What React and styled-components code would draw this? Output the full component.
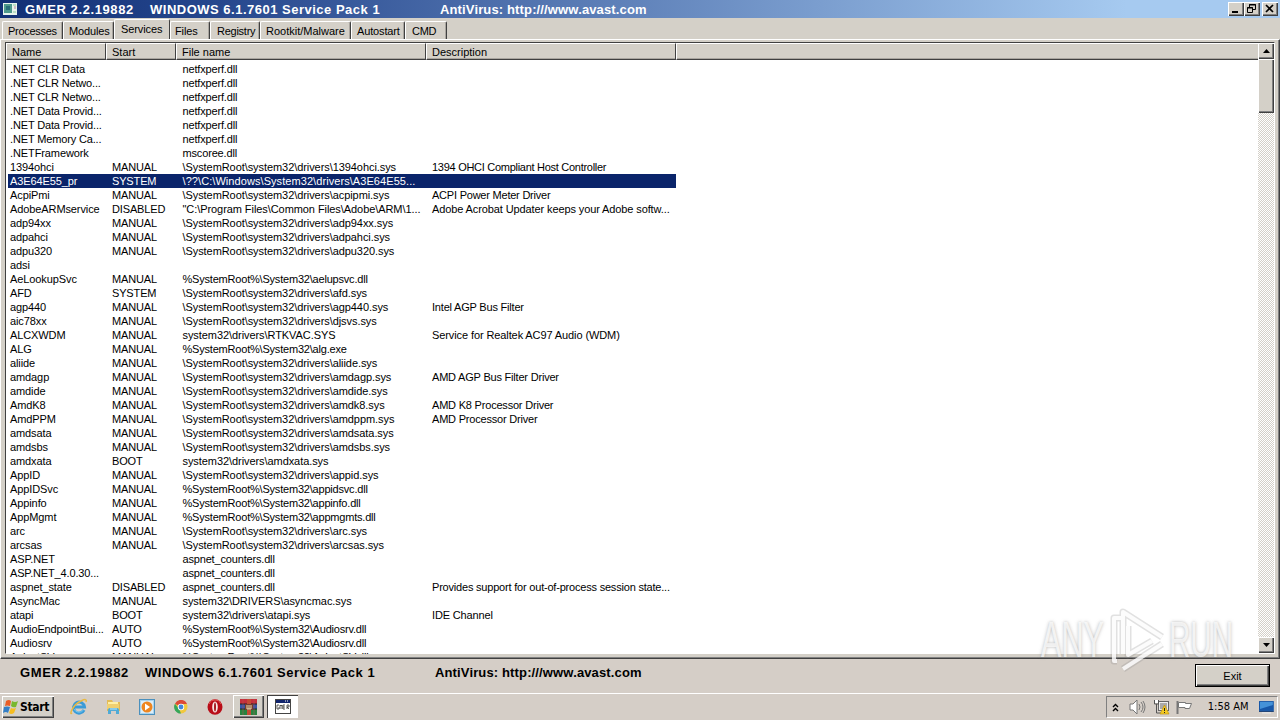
import React from "react";
import styled, { createGlobalStyle, css } from "styled-components";

const face = "#d4d0c8";
const shade = "#808080";
const dark = "#404040";

const Global = createGlobalStyle`
  *, *::before, *::after { box-sizing: border-box; }
  html, body { margin: 0; padding: 0; overflow: hidden; }
  body { background: ${face}; font: 11px/14px "Liberation Sans", Arial, sans-serif; color: #000; }
  svg { display: block; }
`;

const raised = css`
  background: ${face};
  box-shadow: inset 1px 1px #fff, inset -1px -1px ${dark}, inset -2px -2px ${shade};
`;

const Screen = styled.div`
  position: relative;
  width: 1280px;
  height: 720px;
  display: flex;
  flex-direction: column;
  overflow: hidden;
  background: #d5cec7;
`;

const TitleBar = styled.header`
  height: 18px;
  flex: none;
  display: flex;
  align-items: center;
  padding: 0 2px 0 3px;
  color: #fff;
  background: linear-gradient(90deg, #123075 0%, #24458c 16%, #a6caf0 88%, #a6caf0 100%);
`;

const AppIcon = styled.svg`
  width: 14px;
  height: 12px;
  margin-right: 8px;
`;

const Caption = styled.div`
  display: flex;
  white-space: pre;
  font: bold 13px/16px "Liberation Sans", Arial, sans-serif;
`;

const CaptionTitle = styled(Caption)`
  padding-top: 1px;
`;

const Phrase = styled.span`
  width: ${(p) => p.$w}px;
  letter-spacing: ${(p) => p.$ls || 0}px;
`;

const WindowButtons = styled.div`
  display: flex;
  margin-left: auto;
`;

const WindowButton = styled.div`
  ${raised}
  width: 16px;
  height: 14px;
  margin-left: ${(p) => (p.$gap ? 2 : 0)}px;
`;

const TabStrip = styled.nav`
  height: 21px;
  flex: none;
  display: flex;
  align-items: flex-end;
  padding-left: 2px;
  background: ${face};
`;

const Tab = styled.div`
  width: ${(p) => p.$w}px;
  height: ${(p) => (p.$active ? 20 : 18)}px;
  padding: ${(p) => (p.$active ? 2 : 2)}px 0 0 ${(p) => p.$pad}px;
  letter-spacing: ${(p) => p.$ls || 0}px;
  white-space: nowrap;
  border-top: 1px solid #fff;
  border-left: 1px solid #fff;
  border-right: 1px solid ${dark};
  border-radius: 2px 2px 0 0;
  box-shadow: ${(p) => (p.$active ? "none" : `inset -1px 0 #a9a59f`)};
`;

const Page = styled.main`
  height: 620px;
  flex: none;
  display: flex;
  padding: 2px 4px 4px 4px;
  border-top: 1px solid #fff;
  border-left: 1px solid #fff;
  border-right: 1px solid ${dark};
  border-bottom: 1px solid ${dark};
  box-shadow: inset -1px -1px ${shade};
  background: ${face};
`;

const ListView = styled.section`
  flex: 1;
  display: flex;
  border: 1px solid ${dark};
  border-right-color: #fff;
  border-bottom-color: #fff;
  background: #fff;
`;

const ListMain = styled.div`
  flex: 1;
  height: 611px;
  overflow: hidden;
`;

const columns = [
  ["Name", 100],
  ["Start", 70],
  ["File name", 250],
  ["Description", 250],
];

const HeaderRow = styled.div`
  display: flex;
  height: 17px;
  background: ${face};
  margin-bottom: 2px;
`;

const HeaderCell = styled.div`
  width: ${(p) => (p.$w ? `${p.$w}px` : "auto")};
  flex: ${(p) => (p.$w ? "none" : 1)};
  padding: 1px 0 0 5px;
  border-top: 1px solid #fff;
  border-left: 1px solid #fff;
  border-bottom: 1px solid ${dark};
  border-right: ${(p) => (p.$w ? `1px solid ${dark}` : "none")};
  box-shadow: inset 0 -1px #a9a59f;
`;

const Row = styled.div`
  display: grid;
  grid-template-columns: 98px 70px 250px 250px;
  width: 668px;
  height: 14px;
  margin-left: 2px;
  white-space: pre;
  background: ${(p) => (p.$selected ? "#0a246a" : "transparent")};
  color: ${(p) => (p.$selected ? "#fff" : "#000")};
`;

const Cell = styled.span`
  padding-left: ${(p) => p.$pad}px;
  letter-spacing: ${(p) => p.$ls}px;
`;

const ScrollBar = styled.div`
  width: 16px;
  display: flex;
  flex-direction: column;
  background: repeating-conic-gradient(#fff 0 25%, ${face} 0 50%) 0 0 / 2px 2px;
`;

const ScrollButton = styled.div`
  ${raised}
  height: 16px;
  flex: none;
  display: flex;
  align-items: center;
  justify-content: center;
`;

const ScrollThumb = styled.div`
  ${raised}
  height: 54px;
  margin-bottom: auto;
`;

const Footer = styled.footer`
  height: 34px;
  flex: none;
  display: flex;
  align-items: flex-start;
  padding: 5px 10px 0 20px;
`;

const FooterCaption = styled(Caption)`
  padding-top: 1px;
`;

const ExitButton = styled.div`
  width: 75px;
  height: 23px;
  margin-left: auto;
  padding-top: 4px;
  text-align: center;
  border: 1px solid #000;
  background: ${face};
  box-shadow: inset 1px 1px #fff, inset -1px -1px ${dark}, inset -2px -2px ${shade};
`;

const TaskBar = styled.div`
  height: 27px;
  flex: none;
  display: flex;
  align-items: flex-start;
  padding: 1px 2px 0 2px;
  border-top: 1px solid #fff;
`;

const StartButton = styled.div`
  ${raised}
  width: 52px;
  height: 22px;
  margin-right: 8px;
  margin-top: 1px;
  padding-left: 1px;
  display: flex;
  align-items: center;
  font: bold 12px/16px "DejaVu Sans Condensed", "Liberation Sans", sans-serif;
  letter-spacing: -0.35px;
`;

const TaskSlot = styled.div`
  width: ${(p) => (p.$kind ? 31 : 34)}px;
  height: 23px;
  margin-left: ${(p) => (p.$kind ? 3 : 0)}px;
  display: flex;
  align-items: center;
  justify-content: center;
  ${(p) => p.$kind === "open" && raised}
  ${(p) =>
    p.$kind === "open" &&
    css`
      margin-left: 1px;
    `}
  ${(p) =>
    p.$kind === "active" &&
    css`
      background: #fff;
      box-shadow: inset 1px 1px ${dark}, inset -1px -1px #fff;
    `}
`;

const Tray = styled.div`
  width: 172px;
  height: 22px;
  margin: 1px 0 0 auto;
  padding: 0 2px 0 5px;
  display: flex;
  align-items: center;
  border: 1px solid ${shade};
  border-right-color: #fff;
  border-bottom-color: #fff;
`;

const TraySlot = styled.div`
  width: ${(p) => p.$w}px;
`;

const Clock = styled.span`
  font: 11px/14px "DejaVu Sans Condensed", sans-serif;
  width: 51px;
  white-space: nowrap;
`;

const Watermark = styled.div`
  position: absolute;
  left: 1041px;
  top: 606px;
  width: 196px;
  height: 68px;
  display: flex;
  align-items: center;
  opacity: 0.9;
`;

const MarkWord = styled.span`
  width: ${(p) => p.$w}px;
  font: 36px/68px "Liberation Sans", Arial, sans-serif;
  color: rgba(255, 255, 255, 0.75);
  text-shadow: 0 0 3px rgba(120, 120, 120, 0.6);
  transform: scale(${(p) => p.$sx}, 1.4);
  transform-origin: 0 50%;
  white-space: nowrap;
`;

const R = "\\SystemRoot\\system32\\drivers\\";
const S = "%SystemRoot%\\System32\\";
const services = [
  [".NET CLR Data", "", "netfxperf.dll"],
  [".NET CLR Netwo...", "", "netfxperf.dll"],
  [".NET CLR Netwo...", "", "netfxperf.dll"],
  [".NET Data Provid...", "", "netfxperf.dll"],
  [".NET Data Provid...", "", "netfxperf.dll"],
  [".NET Memory Ca...", "", "netfxperf.dll"],
  [".NETFramework", "", "mscoree.dll"],
  ["1394ohci", "MANUAL", R + "1394ohci.sys", "1394 OHCI Compliant Host Controller", -0.28],
  ["A3E64E55_pr", "SYSTEM", "\\??\\C:\\Windows\\System32\\drivers\\A3E64E55..."],
  ["AcpiPmi", "MANUAL", R + "acpipmi.sys", "ACPI Power Meter Driver", -0.22],
  ["AdobeARMservice", "DISABLED", "\"C:\\Program Files\\Common Files\\Adobe\\ARM\\1...", "Adobe Acrobat Updater keeps your Adobe softw...", -0.11],
  ["adp94xx", "MANUAL", R + "adp94xx.sys"],
  ["adpahci", "MANUAL", R + "adpahci.sys"],
  ["adpu320", "MANUAL", R + "adpu320.sys"],
  ["adsi", "", ""],
  ["AeLookupSvc", "MANUAL", S + "aelupsvc.dll"],
  ["AFD", "SYSTEM", R + "afd.sys"],
  ["agp440", "MANUAL", R + "agp440.sys", "Intel AGP Bus Filter", -0.2],
  ["aic78xx", "MANUAL", R + "djsvs.sys"],
  ["ALCXWDM", "MANUAL", "system32\\drivers\\RTKVAC.SYS", "Service for Realtek AC97 Audio (WDM)", -0.1],
  ["ALG", "MANUAL", S + "alg.exe"],
  ["aliide", "MANUAL", R + "aliide.sys"],
  ["amdagp", "MANUAL", R + "amdagp.sys", "AMD AGP Bus Filter Driver", -0.2],
  ["amdide", "MANUAL", R + "amdide.sys"],
  ["AmdK8", "MANUAL", R + "amdk8.sys", "AMD K8 Processor Driver", -0.2],
  ["AmdPPM", "MANUAL", R + "amdppm.sys", "AMD Processor Driver", -0.2],
  ["amdsata", "MANUAL", R + "amdsata.sys"],
  ["amdsbs", "MANUAL", R + "amdsbs.sys"],
  ["amdxata", "BOOT", "system32\\drivers\\amdxata.sys"],
  ["AppID", "MANUAL", R + "appid.sys"],
  ["AppIDSvc", "MANUAL", S + "appidsvc.dll"],
  ["Appinfo", "MANUAL", S + "appinfo.dll"],
  ["AppMgmt", "MANUAL", S + "appmgmts.dll"],
  ["arc", "MANUAL", R + "arc.sys"],
  ["arcsas", "MANUAL", R + "arcsas.sys"],
  ["ASP.NET", "", "aspnet_counters.dll"],
  ["ASP.NET_4.0.30...", "", "aspnet_counters.dll"],
  ["aspnet_state", "DISABLED", "aspnet_counters.dll", "Provides support for out-of-process session state...", -0.2],
  ["AsyncMac", "MANUAL", "system32\\DRIVERS\\asyncmac.sys"],
  ["atapi", "BOOT", "system32\\drivers\\atapi.sys", "IDE Channel", -0.15],
  ["AudioEndpointBui...", "AUTO", S + "Audiosrv.dll"],
  ["Audiosrv", "AUTO", S + "Audiosrv.dll"],
  ["AxInstSV", "MANUAL", S + "AxInstSV.dll"],
];

// Tracking of a file path depends on the kind of prefix it starts with.
const pathTracking = (file) => {
  if (file.startsWith("%")) return -0.2;
  if (file.startsWith("\\??")) return 0.07;
  if (file.startsWith("netfx") || file.startsWith("mscoree")) return -0.16;
  if (file.startsWith("aspnet")) return -0.17;
  return -0.07;
};

const tabs = [
  ["Processes", 61, 5, -0.28],
  ["Modules", 51, 5, -0.15],
  ["Services", 56, 6, -0.1],
  ["Files", 40, 4, -0.1],
  ["Registry", 50, 6, -0.25],
  ["Rootkit/Malware", 91, 5, 0],
  ["Autostart", 54, 5, -0.15],
  ["CMD", 42, 6, -0.3],
];

const GmerIcon = () => (
  <AppIcon viewBox="0 0 14 12">
    <rect width="14" height="12" fill="#e8f4ec" />
    <rect x="1" y="1" width="8" height="9" fill="#4f9a8c" />
    <rect x="3" y="3" width="4" height="4" fill="#286f78" />
    <path d="M10 2h3M10 9h3" stroke="#8ecb9f" />
    <path d="M12 3v3" stroke="#bd8295" />
  </AppIcon>
);

const WindowsFlag = () => (
  <svg width="17" height="16" viewBox="0 0 17 16">
    <path d="M3 2Q6 0 8 2L7 7Q4 6 2 7Z" fill="#e95d26" />
    <path d="M9 2Q12 4 15 2L13 8Q10 9 8 7Z" fill="#78b82f" />
    <path d="M1 8Q4 7 7 8L5 14Q3 12 0 14Z" fill="#347fc6" />
    <path d="M8 9Q10 10 13 9L11 14Q8 16 6 14Z" fill="#f6bd20" />
  </svg>
);

const IEIcon = () => (
  <svg width="18" height="18" viewBox="0 0 18 18">
    <path d="M14 12A5.5 5.5 0 1 1 14.5 9H5" fill="none" stroke="#399bd8" strokeWidth="3" />
    <path d="M13.5 12A5.5 5.5 0 0 1 4 11" fill="none" stroke="#73c8ef" />
    <path d="M2 15C-1 18 2 7 11 3C15 1 17 1 16 4" fill="none" stroke="#e8b943" strokeWidth="1.5" />
  </svg>
);

const FolderIcon = () => (
  <svg width="17" height="17" viewBox="0 0 17 17">
    <path d="M2 2h5l1 2h7v9H2Z" fill="#e3bb55" />
    <path d="M3 4h10v6H3Z" fill="#fff0a4" />
    <path d="M2 6h12v5H2Z" fill="#f0d070" />
    <path d="M3 16v-4q0-2 2-2h7q2 0 2 2v4h-3v-3H6v3Z" fill="#50aad6" />
    <path d="M5 11h7" stroke="#bcecff" />
  </svg>
);

const PlayerIcon = () => (
  <svg width="16" height="16" viewBox="0 0 16 16">
    <rect x=".5" y=".5" width="15" height="15" fill="#a9d4ef" stroke="#4b90bd" />
    <rect x="2" y="2" width="12" height="12" fill="#dceef9" />
    <circle cx="8" cy="8" r="5.5" fill="#ee8620" />
    <path d="M6 4.5v7L11 8Z" fill="#fff" />
  </svg>
);

const ChromeIcon = () => (
  <svg width="14" height="14" viewBox="0 0 14 14">
    <circle cx="7" cy="7" r="6.5" fill="#f1c83d" />
    <path d="M7 7L1 3.8A6.5 6.5 0 0 1 13 4H7Z" fill="#dc4938" />
    <path d="M1 3.8L5 9l2 4.5A6.5 6.5 0 0 1 1 3.8" fill="#35a65b" />
    <circle cx="7" cy="7" r="3.2" fill="#fff" />
    <circle cx="7" cy="7" r="2.4" fill="#4386dc" />
  </svg>
);

const OperaIcon = () => (
  <svg width="16" height="16" viewBox="0 0 16 16">
    <ellipse cx="8" cy="8" rx="7.5" ry="7.8" fill="#b90d18" />
    <path d="M2 5Q4 0 8 1Q12 0 14 5" fill="none" stroke="#e35a56" />
    <ellipse cx="8" cy="8" rx="2.8" ry="5.5" fill="#f8e9e6" />
    <ellipse cx="8" cy="8" rx="1" ry="4.5" fill="#a51c20" />
  </svg>
);

const RarIcon = () => (
  <svg width="17" height="16" viewBox="0 0 17 16">
    <rect width="17" height="5" fill="#c52f3c" />
    <rect y="5" width="17" height="5" fill="#3656a5" />
    <rect y="10" width="17" height="6" fill="#26833f" />
    <path d="M0 5h17M0 10h17" stroke="#222" />
    <path d="M7 0h4v16H7Z" fill="#c44a35" />
    <rect x="5" y="5" width="8" height="6" fill="#733c2d" />
    <path d="M7 6v4h4V6M9 6v4" fill="none" stroke="#f1deb0" />
    <path d="M3 0v16M14 0v16" stroke="#bd5556" strokeOpacity=".5" />
  </svg>
);

const GmerTaskIcon = () => (
  <svg width="16" height="15" viewBox="0 0 16 15">
    <rect x=".5" y=".5" width="15" height="14" fill="#fff" stroke="#444" />
    <path d="M1 1h14v3H1Z" fill="#10246d" />
    <path d="M10 2h1M12 2h1" stroke="#fff" />
    <path d="M4 6H2v4h2V8M5 10V6l1 1 1-1v4M10 6H8v4h2M8 8h2M12 10V6h2v2h-2l2 2" fill="none" stroke="#333" strokeWidth=".8" />
  </svg>
);

const Speaker = () => (
  <svg width="17" height="16" viewBox="0 0 17 16" fill="none" stroke="#777">
    <path d="M1 5h3l4-4v14l-4-4H1Z" fill="#fff" />
    <path d="M10 5q2 3 0 6M12 3q4 5 0 10M14 2q4 6 0 12" />
  </svg>
);

const Network = () => (
  <svg width="17" height="16" viewBox="0 0 17 16">
    <rect x="5.5" y="2.5" width="10" height="9" fill="#eee" stroke="#666" />
    <rect x="7" y="4" width="7" height="6" fill="#aaa" />
    <path d="M1.5 1v4h4V1M3.5 5v9h5" fill="none" stroke="#555" />
    <path d="M2 1v3h3V1" fill="#fff" />
    <path d="M11.5 6L16 15H7Z" fill="#f5cb20" stroke="#c29410" strokeWidth=".7" />
    <path d="M11.5 9v3M11.5 13v1" stroke="#222" />
  </svg>
);

const FlagIcon = () => (
  <svg width="17" height="15" viewBox="0 0 17 15">
    <path d="M1.5 1v13" stroke="#777" strokeWidth="2" />
    <path d="M2.5 2.5h7v1h6l-2 5H9v-1H2.5Z" fill="#fff" stroke="#777" />
  </svg>
);

const DesktopIcon = () => (
  <svg width="17" height="14" viewBox="0 0 17 14">
    <path d="M1 1h15v10H1Z" fill="#1757a8" />
    <path d="M2 2h13v3L2 9Z" fill="#4592d8" />
    <path d="M1 11h15v1H1Z" fill="#183d72" />
    <path d="M4 13h9" stroke="#eee" />
  </svg>
);

const SystemSummary = () => (
  <>
    <Phrase $w={125} $ls={0.6}>GMER 2.2.19882</Phrase>
    <Phrase $w={290} $ls={0.5}>WINDOWS 6.1.7601 Service Pack 1</Phrase>
    <Phrase $w={210} $ls={0.14}>AntiVirus: http:///www.avast.com</Phrase>
  </>
);

export default function App() {
  return (
    <Screen>
      <Global />
      <TitleBar>
        <GmerIcon />
        <CaptionTitle>
          <SystemSummary />
        </CaptionTitle>
        <WindowButtons>
          <WindowButton>
            <svg width="16" height="14"><path d="M4 9h6v2H4Z" /></svg>
          </WindowButton>
          <WindowButton>
            <svg width="16" height="14" fill="none" stroke="#000">
              <path d="M5.5 5V2.5h6v5H9M5 3h7M3.5 5.5h5v5h-5ZM3 6h6" />
            </svg>
          </WindowButton>
          <WindowButton $gap>
            <svg width="16" height="14"><path d="M4 3l7 7M11 3l-7 7" stroke="#000" strokeWidth="1.7" /></svg>
          </WindowButton>
        </WindowButtons>
      </TitleBar>
      <TabStrip>
        {tabs.map(([label, w, pad, ls]) => (
          <Tab key={label} $w={w} $pad={pad} $ls={ls} $active={label === "Services"}>{label}</Tab>
        ))}
      </TabStrip>
      <Page>
        <ListView>
          <ListMain>
            <HeaderRow>
              {columns.map(([label, w]) => <HeaderCell key={label} $w={w}>{label}</HeaderCell>)}
              <HeaderCell />
            </HeaderRow>
            {services.map(([name, start = "", file = "", description = "", ls = 0], i) => (
              <Row key={i} $selected={name === "A3E64E55_pr"}>
                <Cell $pad={2} $ls={name.endsWith("...") ? -0.15 : -0.1}>{name}</Cell>
                <Cell $pad={6} $ls={-0.15}>{start}</Cell>
                <Cell $pad={6.5} $ls={pathTracking(file)}>{file}</Cell>
                <Cell $pad={6} $ls={ls}>{description}</Cell>
              </Row>
            ))}
          </ListMain>
          <ScrollBar>
            <ScrollButton><svg width="7" height="4"><path d="M0 4L3.5 0L7 4Z" /></svg></ScrollButton>
            <ScrollThumb />
            <ScrollButton><svg width="7" height="4"><path d="M0 0L3.5 4L7 0Z" /></svg></ScrollButton>
          </ScrollBar>
        </ListView>
      </Page>
      <Footer>
        <FooterCaption>
          <SystemSummary />
        </FooterCaption>
        <ExitButton>Exit</ExitButton>
      </Footer>
      <TaskBar>
        <StartButton><WindowsFlag />Start</StartButton>
        <TaskSlot><IEIcon /></TaskSlot>
        <TaskSlot><FolderIcon /></TaskSlot>
        <TaskSlot><PlayerIcon /></TaskSlot>
        <TaskSlot><ChromeIcon /></TaskSlot>
        <TaskSlot><OperaIcon /></TaskSlot>
        <TaskSlot $kind="open"><RarIcon /></TaskSlot>
        <TaskSlot $kind="active"><GmerTaskIcon /></TaskSlot>
        <Tray>
          <TraySlot $w={17}>
            <svg width="7" height="9" viewBox="0 0 7 9"><path d="M1 4l2.5-2.5L6 4M1 8l2.5-2.5L6 8" fill="none" stroke="#000" strokeWidth="1.4" /></svg>
          </TraySlot>
          <TraySlot $w={24}><Speaker /></TraySlot>
          <TraySlot $w={24}><Network /></TraySlot>
          <TraySlot $w={32}><FlagIcon /></TraySlot>
          <Clock>1:58 AM</Clock>
          <DesktopIcon />
        </Tray>
      </TaskBar>
      <Watermark>
        <MarkWord $w={68} $sx={0.85}>ANY</MarkWord>
        <svg width="60" height="68" viewBox="0 0 60 68" fill="none">
          <g stroke="#888" strokeOpacity=".28" strokeWidth="7" strokeLinejoin="round">
            <path d="M12 12H5v43h3M14 48V6L53 31M53 38L14 63M19 20v29l24-14" />
          </g>
          <g stroke="#fff" strokeOpacity=".9" strokeWidth="4" strokeLinejoin="round">
            <path d="M12 12H5v43h3M14 48V6L53 31M53 38L14 63M19 20v29l24-14" />
          </g>
        </svg>
        <MarkWord $w={68} $sx={0.82}>RUN</MarkWord>
      </Watermark>
    </Screen>
  );
}
